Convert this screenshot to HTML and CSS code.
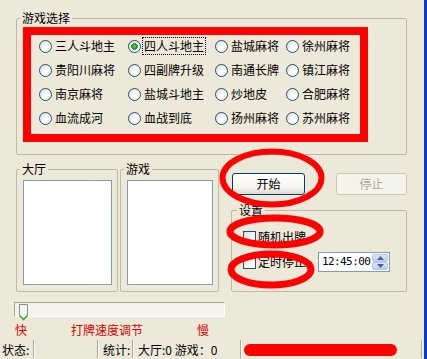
FILE: index.html
```html
<!DOCTYPE html>
<html lang="zh">
<head>
<meta charset="utf-8">
<title>游戏选择</title>
<link rel="stylesheet" href="styles.css">
</head>
<body>
<div class="app">
  <fieldset class="group g-select">
    <legend>游戏选择</legend>
    <div class="mark-box">
      <div class="radio-grid">
        <label class="radio"><span class="rb"></span><span>三人斗地主</span></label>
        <label class="radio"><span class="rb on"></span><span class="focus">四人斗地主</span></label>
        <label class="radio"><span class="rb"></span><span>盐城麻将</span></label>
        <label class="radio"><span class="rb"></span><span>徐州麻将</span></label>
        <label class="radio"><span class="rb"></span><span>贵阳川麻将</span></label>
        <label class="radio"><span class="rb"></span><span>四副牌升级</span></label>
        <label class="radio"><span class="rb"></span><span>南通长牌</span></label>
        <label class="radio"><span class="rb"></span><span>镇江麻将</span></label>
        <label class="radio"><span class="rb"></span><span>南京麻将</span></label>
        <label class="radio"><span class="rb"></span><span>盐城斗地主</span></label>
        <label class="radio"><span class="rb"></span><span>炒地皮</span></label>
        <label class="radio"><span class="rb"></span><span>合肥麻将</span></label>
        <label class="radio"><span class="rb"></span><span>血流成河</span></label>
        <label class="radio"><span class="rb"></span><span>血战到底</span></label>
        <label class="radio"><span class="rb"></span><span>扬州麻将</span></label>
        <label class="radio"><span class="rb"></span><span>苏州麻将</span></label>
      </div>
    </div>
  </fieldset>

  <div class="row2">
    <fieldset class="group g-hall">
      <legend>大厅</legend>
      <div class="listbox"></div>
    </fieldset>
    <fieldset class="group g-game">
      <legend>游戏</legend>
      <div class="listbox"></div>
    </fieldset>
    <div class="rightcol">
      <div class="btnrow">
        <button class="btn btn-start">开始</button>
        <button class="btn btn-stop" disabled>停止</button>
      </div>
      <fieldset class="group g-set">
        <legend>设置</legend>
        <div class="set-body">
          <div class="chk-row"><span class="cb"></span><span>随机出牌</span></div>
          <div class="chk-row"><span class="cb"></span><span>定时停止</span>
            <div class="timepick">
              <span class="time-text">12:45:00</span>
              <span class="spin">
                <span class="spin-btn"><svg width="7" height="4" viewBox="0 0 7 4"><path d="M0 4 L3.5 0 L7 4 Z" fill="#4d6185"/></svg></span>
                <span class="spin-btn"><svg width="7" height="4" viewBox="0 0 7 4"><path d="M0 0 L3.5 4 L7 0 Z" fill="#4d6185"/></svg></span>
              </span>
            </div>
          </div>
        </div>
      </fieldset>
    </div>
  </div>

  <div class="slider">
    <svg class="thumb" width="11" height="17" viewBox="0 0 11 17">
      <path d="M1.5 0.5 H9.5 V11.5 L5.5 15.5 L1.5 11.5 Z" fill="#f5f5f0" stroke="#8a8f86"/>
      <path d="M1.5 11.5 L5.5 15.5 L9.5 11.5" fill="none" stroke="#21a121" stroke-width="1.3"/>
    </svg>
  </div>

  <div class="speed">
    <span>快</span>
    <span>打牌速度调节</span>
    <span>慢</span>
  </div>

  <div class="statusbar">
    <span class="sb-label">状态:</span>
    <span class="sep"></span>
    <span class="sb-empty"></span>
    <span class="sep"></span>
    <span class="sb-stat">统计:</span>
    <span class="sep"></span>
    <span class="sb-count">大厅:0 游戏：0</span>
    <span class="sep"></span>
    <span class="sb-msg"><span class="smear"></span></span>
    <span class="sep"></span>
  </div>

  <svg class="annot" width="424" height="359" viewBox="0 0 424 359">
    <ellipse cx="272" cy="178" rx="49.5" ry="26.5" fill="none" stroke="#ff0000" stroke-width="6"/>
    <ellipse cx="275" cy="231.5" rx="45" ry="13.5" fill="none" stroke="#ff0000" stroke-width="7"/>
    <ellipse cx="271" cy="269.5" rx="40" ry="15.5" fill="none" stroke="#ff0000" stroke-width="7"/>
  </svg>
</div>
</body>
</html>
```

FILE: styles.css
```css
* { box-sizing: border-box; }

html, body {
  margin: 0;
  padding: 0;
}

body {
  background: #ece9d8;
  font-family: "Noto Sans CJK SC", "Noto Sans", sans-serif;
  font-size: 12px;
  line-height: 14px;
  color: #000;
}

.app {
  position: relative;
  width: 427px;
  height: 359px;
  border-right: 3px solid #0c3bcc;
  padding-top: 11px;
  display: flex;
  flex-direction: column;
  overflow: hidden;
}

/* group boxes */
.group {
  margin: 0;
  padding: 0;
  min-width: 0;
  border: 1px solid #bdbaa8;
  border-radius: 2px;
}

.group legend {
  padding: 0 2px;
  margin-left: 3px;
  height: 14px;
  line-height: 14px;
}

.g-select {
  margin-left: 16px;
  width: 391px;
}

.mark-box {
  margin: 2px 0 12px 6px;
  width: 345px;
  height: 115px;
  border: 8px solid #ff0000;
}

.radio-grid {
  display: grid;
  grid-template-columns: 89px 87px 71px 1fr;
  grid-auto-rows: 14px;
  row-gap: 10px;
  padding: 4px 0 0 8px;
}

.radio {
  display: flex;
  align-items: center;
  gap: 3px;
  white-space: nowrap;
}

.rb {
  flex: none;
  width: 13px;
  height: 13px;
  border-radius: 50%;
  border: 1px solid #1c5180;
  background: radial-gradient(circle at 70% 70%, #ffffff 0, #fbfbf9 35%, #d8d6cb 100%);
}

.rb.on {
  background:
    radial-gradient(circle at 50% 50%, #6bdc6b 0, #26a826 2px, #1d8f1d 3px, rgba(0,0,0,0) 3.6px),
    radial-gradient(circle at 70% 70%, #ffffff 0, #fbfbf9 35%, #d8d6cb 100%);
}

.focus {
  padding: 1px 1px;
  margin-left: -1px;
  outline: 1px dotted #000;
}

/* second row */
.row2 {
  display: flex;
  align-items: flex-start;
  margin-top: 7px;
  padding-left: 16px;
}

.g-hall { width: 102px; }

.g-game {
  width: 99px;
  margin-left: 2px;
}

.listbox {
  margin: 4px 5px 6px 6px;
  height: 105px;
  border: 1px solid #7f9db9;
  background: #fff;
}

.rightcol {
  width: 176px;
  margin-left: 12px;
  margin-top: 11px;
}

.btnrow {
  display: flex;
  height: 22px;
}

.btn {
  font-family: "Noto Sans CJK SC", sans-serif;
  font-size: 12px;
  line-height: 14px;
  height: 22px;
  padding: 0;
  border-radius: 3px;
  color: #000;
}

.btn-start {
  width: 73px;
  margin-left: 1px;
  border: 1px solid #003c74;
  background: linear-gradient(#ffffff, #f4f3ee 70%, #dcd8cc);
}

.btn-stop {
  width: 71px;
  margin-left: auto;
  border: 1px solid #c9c7ba;
  background: #f5f4ea;
  color: #aca899;
}

.g-set {
  margin-top: 8px;
  width: 176px;
}

.g-set legend { margin-left: 5px; }

.set-body {
  padding: 10px 0 19px 11px;
  display: flex;
  flex-direction: column;
  gap: 5px;
}

.chk-row {
  display: flex;
  align-items: center;
  height: 20px;
  gap: 2px;
}

.cb {
  flex: none;
  width: 13px;
  height: 13px;
  border: 1px solid #1c5180;
  background: linear-gradient(135deg, #dcdcd6, #ffffff 80%);
}

.timepick {
  display: flex;
  align-items: center;
  margin-left: 10px;
  width: 72px;
  height: 20px;
  border: 1px solid #7f9db9;
  background: #fff;
  padding-left: 3px;
}

.time-text {
  font-family: "DejaVu Sans Mono", "Liberation Mono", monospace;
  font-size: 11px;
  letter-spacing: -0.6px;
  flex: 1;
}

.spin {
  display: flex;
  flex-direction: column;
  width: 16px;
  height: 16px;
  margin-right: 1px;
}

.spin-btn {
  flex: 1;
  display: flex;
  align-items: center;
  justify-content: center;
  border: 1px solid #b4c4ee;
  border-radius: 2px;
  background: linear-gradient(#dde6fd, #bccbf3);
}

/* slider */
.slider {
  margin: 10px 0 0 14px;
  width: 211px;
  height: 15px;
  border: 1px solid;
  border-color: #a7a692 #ffffff #ffffff #a7a692;
  background: #f4f3ee;
}

.thumb {
  display: block;
  margin: 1px 0 0 3px;
}

.speed {
  display: grid;
  grid-template-columns: 56px 126px auto;
  margin-top: 6px;
  padding-left: 15px;
  height: 14px;
  color: #e00000;
}

/* status bar */
.statusbar {
  display: flex;
  margin-top: 2px;
  height: 19px;
  line-height: 19px;
  padding-top: 1px;
}

.sb-label {
  width: 33px;
  padding-left: 2px;
}

.sep {
  flex: none;
  width: 2px;
  border-left: 1px solid #aca899;
  border-right: 1px solid #ffffff;
}

.sb-empty { width: 62px; }

.sb-stat {
  width: 33px;
  padding-left: 4px;
}

.sb-count {
  width: 106px;
  padding-left: 4px;
  white-space: nowrap;
}

.sb-msg {
  width: 179px;
  padding: 4px 0 0 2px;
}

.smear {
  display: block;
  width: 153px;
  height: 12px;
  border-radius: 6px;
  background: #ff0000;
}

/* hand-drawn annotation ellipses */
.annot {
  position: absolute;
  left: 0;
  top: 0;
  pointer-events: none;
}
```
